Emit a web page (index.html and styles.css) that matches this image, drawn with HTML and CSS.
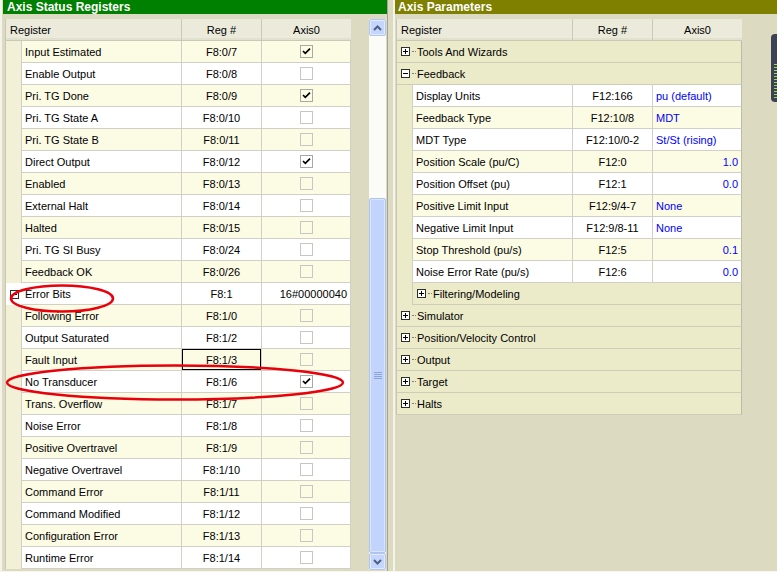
FILE: index.html
```html
<!DOCTYPE html>
<html>
<head>
<meta charset="utf-8">
<title>Axis Registers</title>
<link rel="stylesheet" href="styles.css">
</head>
<body>
<div class="app">
  <section class="panel left-panel">
    <div class="title title-green">Axis Status Registers</div>
    <div class="panel-body">
      <div class="grid">
        <div class="hdr"><div class="hc hreg">Register</div><div class="hc hnum">Reg #</div><div class="hc hax">Axis0</div></div>
        <div class="row y"><div class="ind"></div><div class="c reg">Input Estimated</div><div class="c num">F8:0/7</div><div class="c ax"><span class="cb on"><svg viewBox="0 0 9 9" width="9" height="9"><polyline points="1,4 3.3,6.3 8,1.6" /></svg></span></div></div>
        <div class="row w"><div class="ind"></div><div class="c reg">Enable Output</div><div class="c num">F8:0/8</div><div class="c ax"><span class="cb"></span></div></div>
        <div class="row y"><div class="ind"></div><div class="c reg">Pri. TG Done</div><div class="c num">F8:0/9</div><div class="c ax"><span class="cb on"><svg viewBox="0 0 9 9" width="9" height="9"><polyline points="1,4 3.3,6.3 8,1.6" /></svg></span></div></div>
        <div class="row w"><div class="ind"></div><div class="c reg">Pri. TG State A</div><div class="c num">F8:0/10</div><div class="c ax"><span class="cb"></span></div></div>
        <div class="row y"><div class="ind"></div><div class="c reg">Pri. TG State B</div><div class="c num">F8:0/11</div><div class="c ax"><span class="cb"></span></div></div>
        <div class="row w"><div class="ind"></div><div class="c reg">Direct Output</div><div class="c num">F8:0/12</div><div class="c ax"><span class="cb on"><svg viewBox="0 0 9 9" width="9" height="9"><polyline points="1,4 3.3,6.3 8,1.6" /></svg></span></div></div>
        <div class="row y"><div class="ind"></div><div class="c reg">Enabled</div><div class="c num">F8:0/13</div><div class="c ax"><span class="cb"></span></div></div>
        <div class="row w"><div class="ind"></div><div class="c reg">External Halt</div><div class="c num">F8:0/14</div><div class="c ax"><span class="cb"></span></div></div>
        <div class="row y"><div class="ind"></div><div class="c reg">Halted</div><div class="c num">F8:0/15</div><div class="c ax"><span class="cb"></span></div></div>
        <div class="row w"><div class="ind"></div><div class="c reg">Pri. TG SI Busy</div><div class="c num">F8:0/24</div><div class="c ax"><span class="cb"></span></div></div>
        <div class="row y"><div class="ind"></div><div class="c reg">Feedback OK</div><div class="c num">F8:0/26</div><div class="c ax"><span class="cb"></span></div></div>
        <div class="row w parent"><div class="ind"><span class="tbox"><svg viewBox="0 0 9 9" width="9" height="9"><rect x="0.5" y="0.5" width="8" height="8" /><line x1="2" y1="4.5" x2="7" y2="4.5" /></svg></span></div><div class="c reg">Error Bits</div><div class="c num">F8:1</div><div class="c ax hexv">16#00000040</div></div>
        <div class="row y"><div class="ind"></div><div class="c reg">Following Error</div><div class="c num">F8:1/0</div><div class="c ax"><span class="cb"></span></div></div>
        <div class="row w"><div class="ind"></div><div class="c reg">Output Saturated</div><div class="c num">F8:1/2</div><div class="c ax"><span class="cb"></span></div></div>
        <div class="row y"><div class="ind"></div><div class="c reg">Fault Input</div><div class="c num focus">F8:1/3</div><div class="c ax"><span class="cb"></span></div></div>
        <div class="row w"><div class="ind"></div><div class="c reg">No Transducer</div><div class="c num">F8:1/6</div><div class="c ax"><span class="cb on"><svg viewBox="0 0 9 9" width="9" height="9"><polyline points="1,4 3.3,6.3 8,1.6" /></svg></span></div></div>
        <div class="row y"><div class="ind"></div><div class="c reg">Trans. Overflow</div><div class="c num">F8:1/7</div><div class="c ax"><span class="cb"></span></div></div>
        <div class="row w"><div class="ind"></div><div class="c reg">Noise Error</div><div class="c num">F8:1/8</div><div class="c ax"><span class="cb"></span></div></div>
        <div class="row y"><div class="ind"></div><div class="c reg">Positive Overtravel</div><div class="c num">F8:1/9</div><div class="c ax"><span class="cb"></span></div></div>
        <div class="row w"><div class="ind"></div><div class="c reg">Negative Overtravel</div><div class="c num">F8:1/10</div><div class="c ax"><span class="cb"></span></div></div>
        <div class="row y"><div class="ind"></div><div class="c reg">Command Error</div><div class="c num">F8:1/11</div><div class="c ax"><span class="cb"></span></div></div>
        <div class="row w"><div class="ind"></div><div class="c reg">Command Modified</div><div class="c num">F8:1/12</div><div class="c ax"><span class="cb"></span></div></div>
        <div class="row y"><div class="ind"></div><div class="c reg">Configuration Error</div><div class="c num">F8:1/13</div><div class="c ax"><span class="cb"></span></div></div>
        <div class="row w"><div class="ind"></div><div class="c reg">Runtime Error</div><div class="c num">F8:1/14</div><div class="c ax"><span class="cb"></span></div></div>
      </div>
      <div class="vscroll">
        <div class="sb-btn"><svg viewBox="0 0 9 6" width="9" height="6"><polyline points="1,5 4.5,1.5 8,5" /></svg></div>
        <div class="sb-track">
          <div class="sb-thumb"><svg viewBox="0 0 8 8" width="8" height="8"><line x1="0" y1="0.5" x2="8" y2="0.5"/><line x1="0" y1="2.5" x2="8" y2="2.5"/><line x1="0" y1="4.5" x2="8" y2="4.5"/><line x1="0" y1="6.5" x2="8" y2="6.5"/></svg></div>
        </div>
        <div class="sb-btn"><svg viewBox="0 0 9 6" width="9" height="6"><polyline points="1,1 4.5,4.5 8,1" /></svg></div>
      </div>
    </div>
  </section>
  <div class="splitter"></div>
  <section class="panel right-panel">
    <div class="title title-olive">Axis Parameters</div>
    <div class="panel-body">
      <div class="grid">
        <div class="hdr"><div class="hc hreg">Register</div><div class="hc hnum">Reg #</div><div class="hc hax">Axis0</div></div>
        <div class="grow"><span class="tbox"><svg viewBox="0 0 9 9" width="9" height="9"><rect x="0.5" y="0.5" width="8" height="8" /><line x1="2" y1="4.5" x2="7" y2="4.5" /><line x1="4.5" y1="2" x2="4.5" y2="7" /></svg></span><span class="dots"></span><span class="gtext">Tools And Wizards</span></div>
        <div class="grow"><span class="tbox"><svg viewBox="0 0 9 9" width="9" height="9"><rect x="0.5" y="0.5" width="8" height="8" /><line x1="2" y1="4.5" x2="7" y2="4.5" /></svg></span><span class="dots"></span><span class="gtext">Feedback</span></div>
        <div class="row w"><div class="ind g"></div><div class="c reg">Display Units</div><div class="c num">F12:166</div><div class="c val">pu (default)</div></div>
        <div class="row y"><div class="ind g"></div><div class="c reg">Feedback Type</div><div class="c num">F12:10/8</div><div class="c val">MDT</div></div>
        <div class="row w"><div class="ind g"></div><div class="c reg">MDT Type</div><div class="c num">F12:10/0-2</div><div class="c val">St/St (rising)</div></div>
        <div class="row y"><div class="ind g"></div><div class="c reg">Position Scale (pu/C)</div><div class="c num">F12:0</div><div class="c val r">1.0</div></div>
        <div class="row w"><div class="ind g"></div><div class="c reg">Position Offset (pu)</div><div class="c num">F12:1</div><div class="c val r">0.0</div></div>
        <div class="row y"><div class="ind g"></div><div class="c reg">Positive Limit Input</div><div class="c num">F12:9/4-7</div><div class="c val">None</div></div>
        <div class="row w"><div class="ind g"></div><div class="c reg">Negative Limit Input</div><div class="c num">F12:9/8-11</div><div class="c val">None</div></div>
        <div class="row y"><div class="ind g"></div><div class="c reg">Stop Threshold (pu/s)</div><div class="c num">F12:5</div><div class="c val r">0.1</div></div>
        <div class="row w"><div class="ind g"></div><div class="c reg">Noise Error Rate (pu/s)</div><div class="c num">F12:6</div><div class="c val r">0.0</div></div>
        <div class="row sub"><div class="ind g"></div><div class="c subcell"><span class="tbox"><svg viewBox="0 0 9 9" width="9" height="9"><rect x="0.5" y="0.5" width="8" height="8" /><line x1="2" y1="4.5" x2="7" y2="4.5" /><line x1="4.5" y1="2" x2="4.5" y2="7" /></svg></span><span class="dots"></span><span class="gtext">Filtering/Modeling</span></div></div>
        <div class="grow"><span class="tbox"><svg viewBox="0 0 9 9" width="9" height="9"><rect x="0.5" y="0.5" width="8" height="8" /><line x1="2" y1="4.5" x2="7" y2="4.5" /><line x1="4.5" y1="2" x2="4.5" y2="7" /></svg></span><span class="dots"></span><span class="gtext">Simulator</span></div>
        <div class="grow"><span class="tbox"><svg viewBox="0 0 9 9" width="9" height="9"><rect x="0.5" y="0.5" width="8" height="8" /><line x1="2" y1="4.5" x2="7" y2="4.5" /><line x1="4.5" y1="2" x2="4.5" y2="7" /></svg></span><span class="dots"></span><span class="gtext">Position/Velocity Control</span></div>
        <div class="grow"><span class="tbox"><svg viewBox="0 0 9 9" width="9" height="9"><rect x="0.5" y="0.5" width="8" height="8" /><line x1="2" y1="4.5" x2="7" y2="4.5" /><line x1="4.5" y1="2" x2="4.5" y2="7" /></svg></span><span class="dots"></span><span class="gtext">Output</span></div>
        <div class="grow"><span class="tbox"><svg viewBox="0 0 9 9" width="9" height="9"><rect x="0.5" y="0.5" width="8" height="8" /><line x1="2" y1="4.5" x2="7" y2="4.5" /><line x1="4.5" y1="2" x2="4.5" y2="7" /></svg></span><span class="dots"></span><span class="gtext">Target</span></div>
        <div class="grow"><span class="tbox"><svg viewBox="0 0 9 9" width="9" height="9"><rect x="0.5" y="0.5" width="8" height="8" /><line x1="2" y1="4.5" x2="7" y2="4.5" /><line x1="4.5" y1="2" x2="4.5" y2="7" /></svg></span><span class="dots"></span><span class="gtext">Halts</span></div>
      </div>
    </div>
    <div class="meter"><span class="bar"></span></div>
  </section>
  <svg class="marks" width="777" height="572" viewBox="0 0 777 572">
    <ellipse cx="62" cy="298.5" rx="51" ry="13" />
    <ellipse cx="175" cy="382.5" rx="168" ry="17" />
  </svg>
</div>
</body>
</html>
```
FILE: styles.css
```css
* { box-sizing: border-box; }
html, body { margin: 0; padding: 0; }
body {
  width: 777px;
  height: 572px;
  overflow: hidden;
  background: #dcdbc1;
  font-family: "Liberation Sans", Arial, sans-serif;
  font-size: 11px;
  color: #000;
}
.app {
  position: relative;
  display: flex;
  height: 572px;
  border-bottom: 1px solid #f6f5ef;
}
.panel {
  position: relative;
  display: flex;
  flex-direction: column;
  border-left: 2px solid #f4f3ec;
}
.left-panel {
  width: 388px;
  padding-left: 1px;
  border-right: 1px solid #a3a293;
}
.splitter { width: 5px; }
.right-panel { flex: 1; }

.title {
  height: 14px;
  line-height: 14px;
  padding-left: 4px;
  color: #fff;
  font-weight: bold;
  font-size: 12px;
  white-space: nowrap;
}
.title-green { background: #008000; }
.title-olive { background: #808000; padding-left: 3px; }

.panel-body {
  display: flex;
  align-items: flex-start;
  padding-top: 5px;
}
.grid {
  width: 346px;
  border-left: 1px solid #c9c7b4;
}
.left-panel .grid { margin-left: 2px; }
.right-panel .grid { margin-left: 1px; }

.hdr {
  display: grid;
  grid-template-columns: 176px 80px 89px;
  height: 22px;
  background: #ebeadb;
  border-bottom: 1px solid #cbc8b6;
  box-shadow: inset 0 -2px 0 #e2e0cf;
}
.hc {
  padding-top: 1px;
  line-height: 21px;
  border-right: 1px solid #cbc8b6;
  white-space: nowrap;
}
.hreg { padding-left: 4px; }
.hnum, .hax { text-align: center; }
.hax { border-right: none; }

.row {
  display: grid;
  grid-template-columns: 15px 161px 80px 89px;
  height: 22px;
}
.ind { background: #f2f0d6; }
.ind.g { background: #ecebc9; }
.c {
  padding-top: 1px;
  line-height: 20px;
  border-bottom: 1px solid #d2d0c6;
  border-right: 1px solid #d2d0c6;
  white-space: nowrap;
  overflow: hidden;
}
.reg { border-left: 1px solid #d2d0c6; padding-left: 3px; }
.num { text-align: center; }
.ax { display: flex; align-items: center; justify-content: center; padding-top: 0; }
.row.y .c { background: #fcfbe4; }
.row.w .c { background: #fff; }
.row.parent .ind {
  background: #fff;
  display: flex;
  align-items: center;
  padding-left: 4px;
}
.row.parent .reg { border-left-color: transparent; }
.hexv { justify-content: flex-end; padding-right: 3px; padding-top: 1px; }
.focus { box-shadow: inset 0 0 0 1px #000; }

.cb {
  width: 13px;
  height: 13px;
  border: 1px solid #c6c6c2;
  display: flex;
  align-items: center;
  justify-content: center;
}
.cb.on { border-color: #a9a9a4; }
.cb svg polyline { fill: none; stroke: #000; stroke-width: 1.7; }

.tbox { display: flex; width: 9px; height: 9px; flex: none; }
.tbox svg rect { fill: #fff; stroke: #2e2e2e; stroke-width: 1; }
.tbox svg line { stroke: #000; stroke-width: 1; }
.dots {
  width: 4px;
  margin-left: 2px;
  border-top: 1px dotted #808080;
  flex: none;
}
.gtext { margin-left: 1px; padding-top: 1px; white-space: nowrap; }

.grow {
  display: flex;
  align-items: center;
  height: 22px;
  padding-left: 4px;
  background: #ecebc9;
  border-bottom: 1px solid #cfcdb8;
  border-right: 1px solid #bcbaa9;
}
.sub .subcell {
  grid-column: 2 / 5;
  display: flex;
  align-items: center;
  padding: 0 0 0 4px;
  background: #ecebc9;
  border-left: 1px solid #cfcdb8;
  border-bottom: 1px solid #cfcdb8;
  border-right: 1px solid #bcbaa9;
}
.val { color: #0000ff; padding-left: 3px; padding-right: 3px; }
.val.r { text-align: right; }
.row .val { border-right-color: #bcbaa9; }

.vscroll {
  margin-left: 18px;
  width: 17px;
  height: 551px;
  display: flex;
  flex-direction: column;
  background: #fbfbf8;
}
.sb-btn {
  height: 17px;
  flex: none;
  display: flex;
  align-items: center;
  justify-content: center;
  background: #c5d6fc;
  border: 1px solid #b3c6f2;
  border-radius: 2px;
  box-shadow: inset 0 0 0 1px #e2ebfe;
}
.sb-btn svg polyline { fill: none; stroke: #4d6185; stroke-width: 2; }
.sb-track {
  flex: 1;
  display: flex;
  flex-direction: column;
  padding-top: 162px;
}
.sb-thumb {
  flex: 1;
  display: flex;
  align-items: center;
  justify-content: center;
  background: #c3d4fc;
  border: 1px solid #afc3f1;
  border-radius: 2px;
  box-shadow: inset 0 0 0 1px #dbe6fe;
}
.sb-thumb svg line { stroke: #8ca4dc; stroke-width: 1; }

.meter {
  position: absolute;
  left: 376px;
  top: 34px;
  width: 12px;
  height: 68px;
  background: #3d4352;
  border-radius: 4px;
  padding: 30px 0 4px 3px;
}
.meter .bar {
  display: block;
  width: 6px;
  height: 100%;
  background: repeating-linear-gradient(#8ee05a 0 1px, #3d4352 1px 3px);
}

.marks {
  position: absolute;
  left: 0;
  top: 0;
  pointer-events: none;
}
.marks ellipse { fill: none; stroke: #e8000b; stroke-width: 2.5; }
```
